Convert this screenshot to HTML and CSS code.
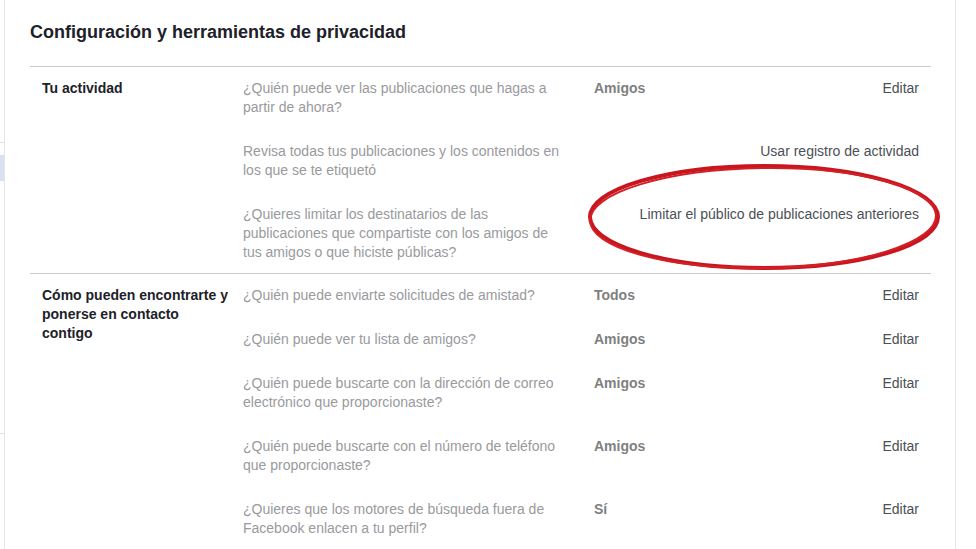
FILE: index.html
```html
<!DOCTYPE html>
<html lang="es">

<head>
  <meta charset="UTF-8">
  <meta name="viewport" content="width=device-width, initial-scale=1.0">
  <title>Configuración y herramientas de privacidad</title>
  <link rel="stylesheet" href="styles.css">
</head>

<body>
  <div class="page">
    <div class="sidebar">
      <div class="nav-tick nav-tick-top"></div>
      <div class="nav-active"></div>
      <div class="nav-tick nav-tick-bottom"></div>
    </div>

    <div class="main">
      <h2 class="title">Configuración y herramientas de privacidad</h2>

      <div class="settings">
        <!-- Tu actividad -->
        <div class="section">
          <div class="section-label">Tu actividad</div>
          <div class="items">
            <div class="item">
              <div class="question">¿Quién puede ver las publicaciones que hagas a partir de ahora?</div>
              <div class="value">Amigos</div>
              <a class="action" href="#">Editar</a>
            </div>
            <div class="item">
              <div class="question">Revisa todas tus publicaciones y los contenidos en los que se te etiquetó</div>
              <div class="value"></div>
              <a class="action" href="#">Usar registro de actividad</a>
            </div>
            <div class="item">
              <div class="question">¿Quieres limitar los destinatarios de las publicaciones que compartiste con los amigos de tus amigos o que hiciste públicas?</div>
              <div class="value"></div>
              <a class="action marked" href="#">
                Limitar el público de publicaciones anteriores
                <svg class="circle" viewBox="0 0 356 110" aria-hidden="true">
                  <ellipse cx="178" cy="55" rx="174" ry="51" fill="none" stroke="#c8161e" stroke-width="4"/>
                  <ellipse cx="177" cy="56" rx="173" ry="50" fill="none" stroke="#d41f26" stroke-width="2" transform="rotate(-0.8 178 55)"/>
                </svg>
              </a>
            </div>
          </div>
        </div>

        <!-- Cómo pueden encontrarte -->
        <div class="section">
          <div class="section-label">Cómo pueden encontrarte y ponerse en contacto contigo</div>
          <div class="items">
            <div class="item">
              <div class="question">¿Quién puede enviarte solicitudes de amistad?</div>
              <div class="value">Todos</div>
              <a class="action" href="#">Editar</a>
            </div>
            <div class="item">
              <div class="question">¿Quién puede ver tu lista de amigos?</div>
              <div class="value">Amigos</div>
              <a class="action" href="#">Editar</a>
            </div>
            <div class="item">
              <div class="question">¿Quién puede buscarte con la dirección de correo electrónico que proporcionaste?</div>
              <div class="value">Amigos</div>
              <a class="action" href="#">Editar</a>
            </div>
            <div class="item">
              <div class="question">¿Quién puede buscarte con el número de teléfono que proporcionaste?</div>
              <div class="value">Amigos</div>
              <a class="action" href="#">Editar</a>
            </div>
            <div class="item">
              <div class="question">¿Quieres que los motores de búsqueda fuera de Facebook enlacen a tu perfil?</div>
              <div class="value">Sí</div>
              <a class="action" href="#">Editar</a>
            </div>
          </div>
        </div>
      </div>
    </div>

    <div class="gutter"></div>
  </div>
</body>

</html>
```

FILE: styles.css
```css
/* Estilização Geral */
* {
  margin: 0;
  padding: 0;
  box-sizing: border-box;
}

html,
body {
  height: 100%;
  overflow: hidden;
}

body {
  font-family: "Liberation Sans", Arial, Helvetica, sans-serif;
  background: #fff;
  color: #1d2129;
}

.page {
  display: flex;
  height: 100%;
}

/* Menu lateral (cortado) */
.sidebar {
  width: 5px;
  border-right: 1px solid #e6e6e6;
  flex-shrink: 0;
}

.nav-tick {
  height: 1px;
  background-color: #e0e0e0;
}

.nav-tick-top {
  margin-top: 142px;
}

.nav-active {
  margin-top: 12px;
  height: 26px;
  background-color: #d9e1f0;
}

.nav-tick-bottom {
  margin-top: 252px;
}

/* Conteúdo */
.main {
  width: 951px;
  padding: 21px 24px 0 25px;
  border-right: 1px solid #e6e6e6;
}

.gutter {
  flex: 1;
}

.title {
  font-size: 18px;
  line-height: 22px;
  font-weight: bold;
  color: #1d2129;
  margin-bottom: 23px;
}

.section {
  display: flex;
  border-top: 1px solid #cbcbcb;
  font-size: 14px;
  line-height: 19px;
}

.section-label {
  width: 213px;
  flex-shrink: 0;
  padding: 12px 11px 0 12px;
  font-weight: bold;
  color: #1d2129;
}

.items {
  flex: 1;
  padding-right: 12px;
}

.item {
  display: flex;
  align-items: flex-start;
  padding: 12px 0 13px;
}

.item:last-child {
  padding-bottom: 11px;
}

.question {
  width: 322px;
  flex-shrink: 0;
  color: #999a9e;
}

.value {
  flex: 1;
  margin-left: 29px;
  font-weight: bold;
  color: #808080;
}

.action {
  color: #4b4f56;
  text-decoration: none;
  white-space: nowrap;
}

.marked {
  position: relative;
}

.circle {
  position: absolute;
  right: -23px;
  top: -43px;
  width: 356px;
  height: 110px;
  pointer-events: none;
}
```
